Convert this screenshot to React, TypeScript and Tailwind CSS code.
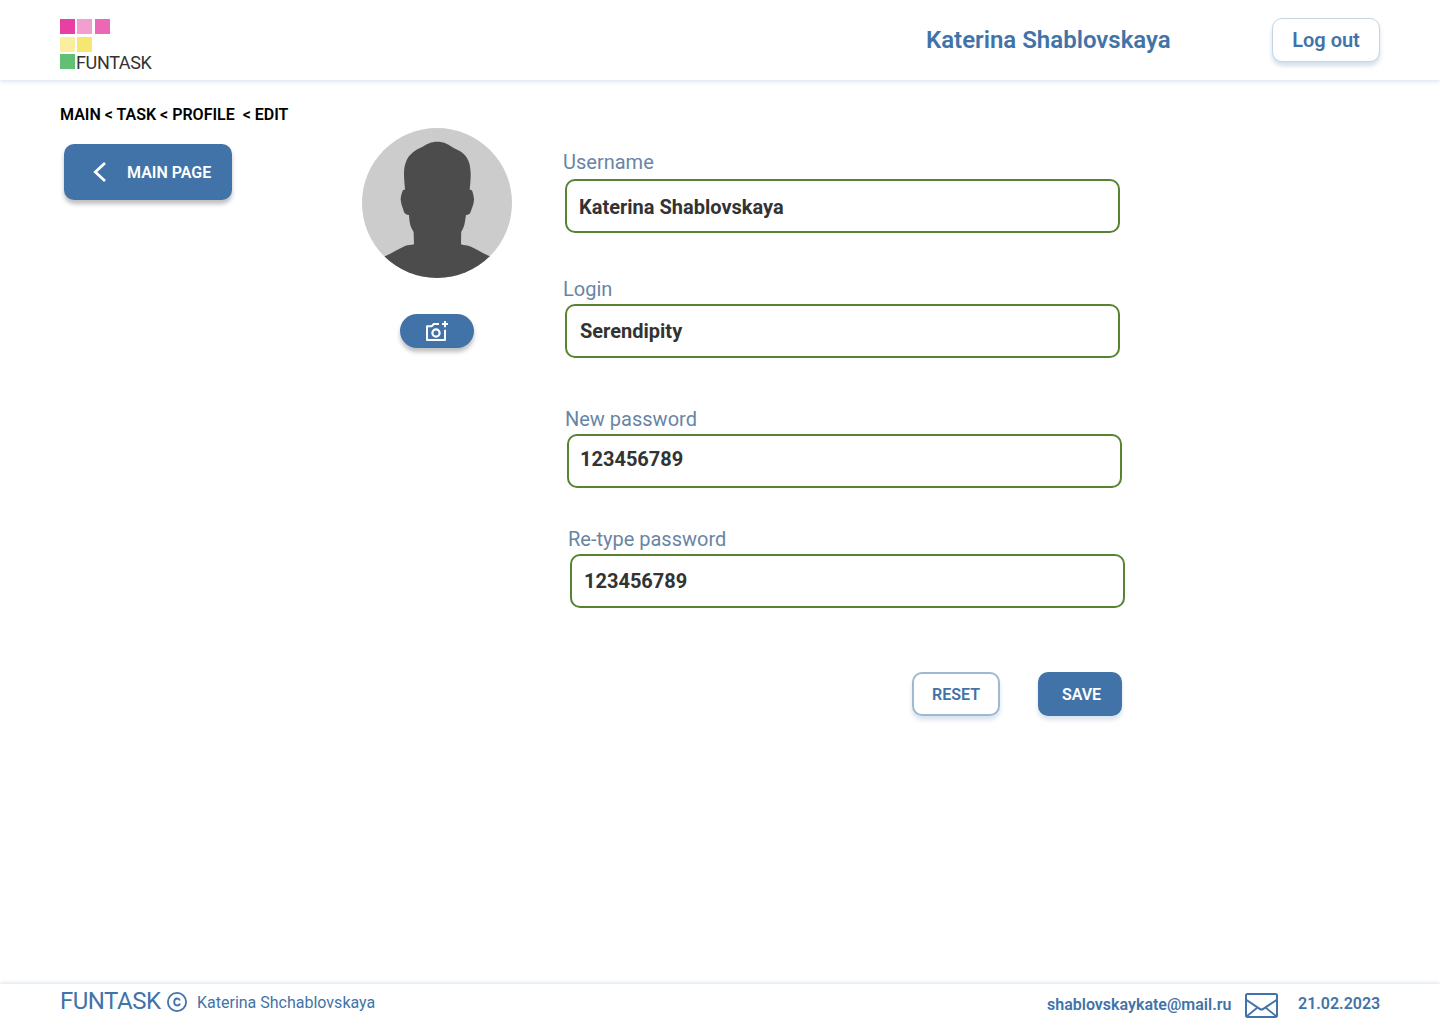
import React from "react";

type FieldProps = {
  label: string;
  value: string;
  className: string;
  labelClass: string;
  boxClass: string;
};

function Field({ label, value, className, labelClass, boxClass }: FieldProps) {
  return (
    <div className={`flex w-[555px] flex-col ${className}`}>
      <label className={`block h-6 text-xl leading-6 text-[#6885a5] ${labelClass}`}>{label}</label>
      <div className={`flex h-[54px] items-center rounded-[10px] border-2 border-[#578332] text-xl font-bold text-[#333333] ${boxClass}`}>
        <span className="whitespace-nowrap leading-6">{value}</span>
      </div>
    </div>
  );
}

function Logo() {
  return (
    <div className="flex h-[50px] w-[100px] flex-col">
      <div className="mb-[3px] flex">
        <i className="size-[15px] bg-[#e740a2]" />
        <i className="ml-[2px] size-[15px] bg-[#f29fd0]" />
        <i className="ml-[3px] size-[15px] bg-[#eb68b5]" />
      </div>
      <div className="mb-[2px] flex gap-[2px]">
        <i className="size-[15px] bg-[#faef9e]" />
        <i className="size-[15px] bg-[#f5e770]" />
      </div>
      <div className="flex">
        <i className="size-[15px] shrink-0 bg-[#62bf76]" />
        <span className="ml-[1px] mt-[1px] text-[18px] font-normal leading-[15px] tracking-[-0.35px] text-[#333333]">FUNTASK</span>
      </div>
    </div>
  );
}

function Avatar() {
  return (
    <svg width="150" height="150" viewBox="0 0 150 150" className="block">
      <defs>
        <clipPath id="avatar-circle">
          <circle cx="75" cy="75" r="75" />
        </clipPath>
      </defs>
      <g clipPath="url(#avatar-circle)">
        <rect width="150" height="150" fill="#cccccc" />
        <path
          fill="#4c4c4c"
          d="M75.3 13.7C69 13.7 65 16 60.7 18.7C57 20.5 53.5 21.8 51 24.3C47.500 27.300 45.500 30 44.300 33C42.500 37.500 42 41 42 46C42 52 42.700 57 43 61.700C41.500 61.500 40.800 62 40.200 64C39.300 67 38.700 69 38.700 71.500C38.900 76 40.800 79.500 41.800 83.500C42.500 86 44.500 86.800 47 87C47.300 91 47.500 94.500 48.600 98C49.400 100.500 51 102.500 51.600 104L52 116.300C49 117.300 46 116.700 43 118C36 121 29.500 125.500 22.700 128.300L22 150H128V128.300C121 125.500 115 121.500 108.500 118.500C105.500 117 102 117.500 99 116.300L99.200 104C100.500 101.500 101.700 99.500 102.300 97C103 94 103.400 90.500 104 87C106.500 87 107.900 86 108.700 83.700C110 79.500 112 76 112 71.500C112 69 111.200 66.500 110.600 64C110.200 62.300 109.400 61.500 107.700 61.700C108.200 56.500 108.700 51.500 108.700 46C108.500 41 108.100 37 106.500 33C104.500 28.500 102.500 26.500 99.700 24.300C96.500 22 93 20.700 89.700 18.700C85.500 16 81.600 13.700 75.300 13.700Z"
        />
      </g>
    </svg>
  );
}

function CameraPlusIcon() {
  return (
    <svg width="24" height="22" viewBox="0 0 24 22" fill="none" className="block">
      <path d="M14 4H8.800L6.800 6.200H2V20H20V9.800" stroke="white" strokeWidth="2" strokeLinejoin="round" />
      <circle cx="11" cy="13" r="3.600" stroke="white" strokeWidth="2.200" />
      <path d="M20 1V7.200M17 4H23" stroke="white" strokeWidth="2" />
    </svg>
  );
}

function CopyrightIcon() {
  return (
    <svg width="20" height="20" viewBox="0 0 20 20" fill="none" stroke="#4273a8" className="block">
      <circle cx="10" cy="10" r="9.100" strokeWidth="1.800" />
      <path d="M12.900 8.400C12.500 7.100 11.500 6.500 10.100 6.500C8.300 6.500 7.200 7.800 7.200 10C7.200 12.200 8.300 13.500 10.100 13.500C11.600 13.500 12.600 12.800 12.900 11.500" strokeWidth="1.800" />
    </svg>
  );
}

function MailIcon() {
  return (
    <svg width="33" height="25" viewBox="0 0 33 25" fill="none" stroke="#4273a8" strokeWidth="2" className="block">
      <rect x="1" y="1" width="31" height="23" rx="1.500" />
      <path d="M1.500 7L14.700 15.900Q16.500 17.200 18.300 15.900L31.500 7" />
      <path d="M1.500 23.500L12.500 14.500M31.500 23.500L20.500 14.500" strokeWidth="1.700" />
    </svg>
  );
}

export default function App() {
  return (
    <div className="flex h-[1024px] w-[1440px] flex-col overflow-hidden bg-white font-['Roboto',sans-serif]">
      <header className="flex h-20 shrink-0 items-start bg-white px-[60px] shadow-[0_2px_4px_rgba(64,114,167,0.17)]">
        <div className="mt-[19px]"><Logo /></div>
        <h1 className="ml-auto mt-[26px] w-[346px] whitespace-nowrap text-2xl font-semibold leading-7 text-[#4273a8]">Katerina Shablovskaya</h1>
        <button className="mt-[18px] h-11 w-[108px] whitespace-nowrap rounded-[10px] border border-[#c5d5e4] bg-white text-xl font-semibold text-[#4273a8] shadow-[0_4px_4px_rgba(64,114,167,0.22)]">Log out</button>
      </header>

      <main className="flex flex-1 items-start">
        <aside className="w-[362px] shrink-0 pl-[60px] pt-[25px]">
          <nav className="h-5 whitespace-pre text-base font-semibold leading-5 text-black">{"MAIN < TASK < PROFILE  < EDIT"}</nav>
          <button className="ml-1 mt-[19px] flex h-14 w-[168px] items-center rounded-[10px] bg-[#4273a8] pl-[29px] text-base font-semibold text-white shadow-[0_4px_4px_rgba(0,0,0,0.25)]">
            <svg width="14" height="20" viewBox="0 0 14 20" fill="none" className="block shrink-0"><path d="M12 1L2.300 10L12 19" stroke="white" strokeWidth="2.700" /></svg>
            <span className="ml-5 whitespace-nowrap pt-px">MAIN PAGE</span>
          </button>
        </aside>

        <div className="flex w-[150px] shrink-0 flex-col items-center pt-12">
          <Avatar />
          <button aria-label="Add photo" className="mt-9 flex h-[34px] w-[74px] items-center justify-center rounded-full bg-[#4273a8] shadow-[0_4px_4px_rgba(0,0,0,0.25)]"><CameraPlusIcon /></button>
        </div>

        <form className="ml-[53px] flex flex-col pt-[70px]">
          <Field label="Username" value="Katerina Shablovskaya" className="" labelClass="-ml-[2px]" boxClass="mt-[5px] pl-3 pt-[2px]" />
          <Field label="Login" value="Serendipity" className="mt-11" labelClass="-ml-[2px]" boxClass="mt-[3px] pl-[13px]" />
          <Field label="New password" value="123456789" className="ml-[2px] mt-[49px]" labelClass="-ml-[2px]" boxClass="mt-[3px] pl-[11px] pb-1" />
          <Field label="Re-type password" value="123456789" className="ml-[5px] mt-[39px]" labelClass="-ml-[2px]" boxClass="mt-[3px] pl-3" />
          <div className="mt-16 flex w-[557px] justify-end gap-[38px]">
            <button type="reset" className="h-11 w-[88px] rounded-[10px] border-2 border-[#9fb8d3] bg-white pt-px text-base font-semibold text-[#4273a8] shadow-[0_4px_4px_rgba(64,114,167,0.2)]">RESET</button>
            <button type="button" className="h-11 w-[84px] rounded-[10px] bg-[#4273a8] pl-[3px] pt-px text-base font-semibold text-white shadow-[0_4px_4px_rgba(64,114,167,0.2)]">SAVE</button>
          </div>
        </form>
      </main>

      <footer className="flex h-10 shrink-0 items-start bg-white pl-[60px] text-[#4273a8] shadow-[0_-2px_3px_rgba(64,114,167,0.14)]">
        <span className="mt-[5px] w-[107px] whitespace-nowrap text-[24px] font-normal leading-6 tracking-[-0.5px]">FUNTASK</span>
        <div className="mt-2"><CopyrightIcon /></div>
        <span className="ml-[10px] mt-[9px] whitespace-nowrap text-base leading-5">Katerina Shchablovskaya</span>
        <div className="ml-auto flex w-[393px] items-start text-base font-semibold leading-5">
          <span className="mt-[11px] w-[198px] whitespace-nowrap">shablovskaykate@mail.ru</span>
          <div className="mt-[9px]"><MailIcon /></div>
          <span className="ml-5 mt-[10px] whitespace-nowrap">21.02.2023</span>
        </div>
      </footer>
    </div>
  );
}
